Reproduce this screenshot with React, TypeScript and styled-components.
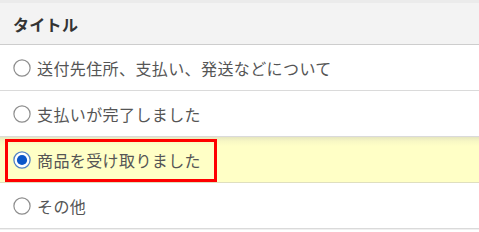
import styled, { createGlobalStyle } from 'styled-components';

const GlobalStyle = createGlobalStyle`
  html, body {
    margin: 0;
    padding: 0;
    background: #ffffff;
  }
  body {
    font-family: "Noto Sans CJK JP", "Noto Sans", sans-serif;
  }
`;

const Panel = styled.div`
  width: 479px;
  height: 232px;
  overflow: hidden;
  background: #ffffff;
  border-top: 3px solid #ebebeb;
`;

const Header = styled.div`
  height: 41px;
  display: flex;
  align-items: center;
  padding-left: 13px;
  background: #f3f3f3;
  border-bottom: 1px solid #cdcdcd;
  box-shadow: 0 1px 0 #e8e8e8;
  color: #333333;
  font-size: 16px;
  font-weight: 700;
  letter-spacing: 0.3px;
`;

const Row = styled.label<{ $selected?: boolean }>`
  position: relative;
  height: 45px;
  display: flex;
  align-items: center;
  gap: 6px;
  padding-left: 13px;
  border-bottom: 1px solid #dadada;
  box-shadow: 0 1px 0 #f0f0f0;
  background: ${p =>
    p.$selected
      ? 'linear-gradient(to bottom, #e6e6bf 0px, #f7f7c4 4px, #ffffc6 9px, #ffffc6 100%)'
      : '#ffffff'};
  border-bottom-color: ${p => (p.$selected ? '#dfdfbf' : '#dadada')};
  cursor: pointer;
`;

const RowText = styled.span`
  color: #555555;
  font-size: 16px;
  letter-spacing: 0.4px;
  line-height: 1;
`;

const Highlight = styled.div`
  position: absolute;
  left: 5px;
  top: 2px;
  width: 206px;
  height: 37px;
  border: 3px solid #ff0000;
  pointer-events: none;
`;

const RadioIcon = ({ checked }: { checked?: boolean }) => (
  <svg width="18" height="18" viewBox="0 0 18 18" style={{ flexShrink: 0 }}>
    {checked ? (
      <>
        <circle cx="9" cy="9" r="8.1" fill="#ffffff" stroke="#5283c4" strokeWidth="1.3" />
        <circle cx="9" cy="9" r="5.1" fill="#0b57c9" />
      </>
    ) : (
      <circle cx="9" cy="9" r="8.1" fill="#ffffff" stroke="#8e8e8e" strokeWidth="1.2" />
    )}
  </svg>
);

const options = [
  '送付先住所、支払い、発送などについて',
  '支払いが完了しました',
  '商品を受け取りました',
  'その他',
];

export default function App() {
  const selected = 2;
  return (
    <>
      <GlobalStyle />
      <Panel>
        <Header>タイトル</Header>
        {options.map((text, i) => (
          <Row key={text} $selected={i === selected}>
            <RadioIcon checked={i === selected} />
            <RowText>{text}</RowText>
            {i === selected && <Highlight />}
          </Row>
        ))}
      </Panel>
    </>
  );
}
